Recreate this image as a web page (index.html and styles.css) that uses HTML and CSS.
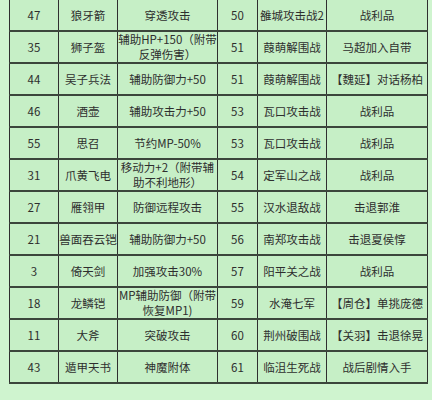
FILE: index.html
```html
<!DOCTYPE html>
<html lang="zh-CN">
<head>
<meta charset="utf-8">
<link rel="stylesheet" href="styles.css">
</head>
<body>
<table class="grid">
  <colgroup>
    <col class="c1"><col class="c2"><col class="c3"><col class="c4"><col class="c5"><col class="c6">
  </colgroup>
  <tr><td>47</td><td>狼牙箭</td><td>穿透攻击</td><td>50</td><td>雒城攻击战2</td><td>战利品</td></tr>
  <tr><td>35</td><td>狮子盔</td><td>辅助HP+150（附带<br>反弹伤害）</td><td>51</td><td>葭萌解围战</td><td>马超加入自带</td></tr>
  <tr><td>44</td><td>吴子兵法</td><td>辅助防御力+50</td><td>51</td><td>葭萌解围战</td><td>【魏延】对话杨柏</td></tr>
  <tr><td>46</td><td>酒壶</td><td>辅助攻击力+50</td><td>53</td><td>瓦口攻击战</td><td>战利品</td></tr>
  <tr><td>55</td><td>思召</td><td>节约MP-50%</td><td>53</td><td>瓦口攻击战</td><td>战利品</td></tr>
  <tr><td>31</td><td>爪黄飞电</td><td>移动力+2（附带辅<br>助不利地形）</td><td>54</td><td>定军山之战</td><td>战利品</td></tr>
  <tr><td>27</td><td>雁翎甲</td><td>防御远程攻击</td><td>55</td><td>汉水退敌战</td><td>击退郭淮</td></tr>
  <tr><td>21</td><td>兽面吞云铠</td><td>辅助防御力+50</td><td>56</td><td>南郑攻击战</td><td>击退夏侯惇</td></tr>
  <tr><td>3</td><td>倚天剑</td><td>加强攻击30%</td><td>57</td><td>阳平关之战</td><td>战利品</td></tr>
  <tr><td>18</td><td>龙鳞铠</td><td>MP辅助防御（附带<br>恢复MP1)</td><td>59</td><td>水淹七军</td><td>【周仓】单挑庞德</td></tr>
  <tr><td>11</td><td>大斧</td><td>突破攻击</td><td>60</td><td>荆州破围战</td><td>【关羽】击退徐晃</td></tr>
  <tr><td>43</td><td>遁甲天书</td><td>神魔附体</td><td>61</td><td>临沮生死战</td><td>战后剧情入手</td></tr>
</table>
</body>
</html>
```

FILE: styles.css
```css
html, body {
  margin: 0;
  padding: 0;
  background: #cff4cf;
}
body {
  padding-left: 9px;
  font-family: "Noto Sans CJK SC", "DejaVu Sans", sans-serif;
  font-size: 11.5px;
  color: #2e2e2e;
}
.grid {
  margin-top: -2px;
  border-collapse: collapse;
  table-layout: fixed;
  width: 418px;
  background: #c6efc6;
}
.c1 { width: 49px; }
.c2 { width: 59px; }
.c3 { width: 100px; }
.c4 { width: 40px; }
.c5 { width: 69px; }
.c6 { width: 101px; }
.grid tr {
  height: 32px;
}
.grid td {
  padding: 0;
  text-align: center;
  vertical-align: middle;
  white-space: nowrap;
  overflow: hidden;
  border-left: 1px solid #2f2f2f;
  border-right: 1px solid #2f2f2f;
  border-top: 2px solid #3c463c;
  border-bottom: 2px solid #3c463c;
  line-height: 15px;
}
```
